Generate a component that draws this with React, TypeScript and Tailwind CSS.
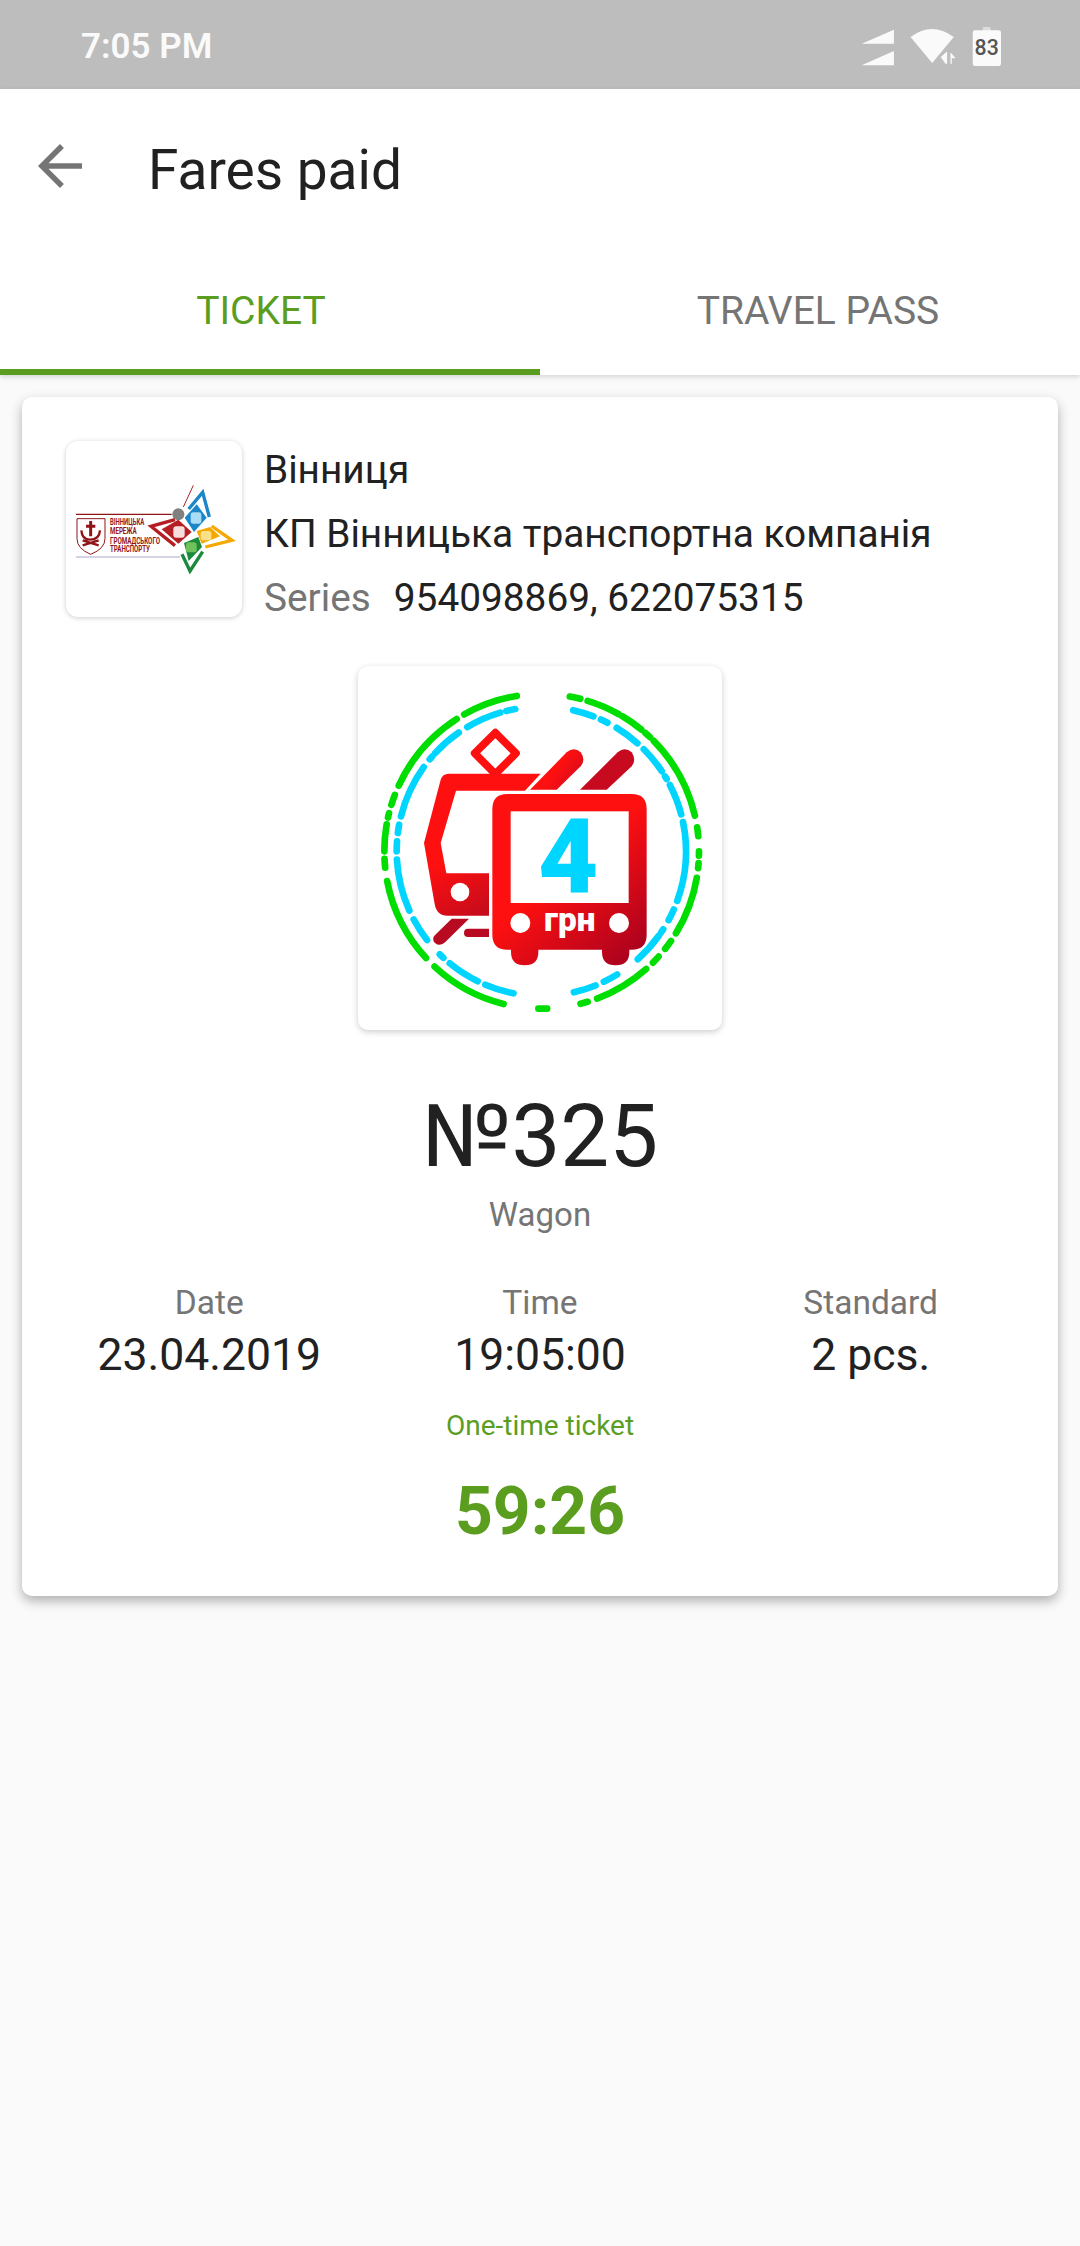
const GREEN_ARCS: Array<[number, number]> = [
  [10.3, 14.2], [17, 29.2], [30.8, 39.2], [41.1, 43.5], [45.4, 76.9], [81.2, 84.5], [90, 91.6], [94.3, 96.1],
  [99.7, 121.4], [124.7, 128.3], [132, 135], [138.4, 159.4], [163, 165.7], [178, 181.2], [194, 222.9],
  [227.3, 259.1], [264, 267.3], [270, 279.9], [282.4, 284], [287.2, 291], [294.7, 327.3], [330.5, 350.9],
];

const BLUE_ARCS: Array<[number, number]> = [
  [12.7, 21.1], [24.3, 27.2], [31.4, 41.6], [45.1, 56.4], [58.8, 60], [62.7, 75.2], [78.3, 110], [113.7, 118.4],
  [122.6, 124], [125.6, 138.2], [148.4, 154.4], [158, 167], [191.1, 202.8], [206.1, 219.3], [222.6, 224.6],
  [232.2, 241.9], [245.8, 266.7], [270, 274], [277.3, 280.6], [284, 305.6], [309.5, 311], [312.8, 325.2],
  [329.2, 343.5], [346, 349.6],
];

const arcPath = (cx: number, cy: number, r: number, from: number, to: number) => {
  const point = (deg: number) => {
    const rad = (deg * Math.PI) / 180;
    return `${(cx + r * Math.sin(rad)).toFixed(1)} ${(cy - r * Math.cos(rad)).toFixed(1)}`;
  };
  return `M${point(from)} A${r} ${r} 0 0 1 ${point(to)}`;
};

const StatusIcons = () => (
  <svg viewBox="180 80 430 120" className="h-[40px] w-[143px] mt-[4px]">
    <path d="M185 130 L282 88 V130 Z M185 195 L282 152 V195 Z" fill="#fafafa" />
    <path d="M332 110 Q396 62 462 110 L397 188 Z" fill="#fafafa" />
    <path d="M420 170 L444 148 V192 L436 192 Z M450 150 L472 176 L458 176 V192 H450 Z" fill="#fafafa" stroke="#bdbdbd" strokeWidth="4" />
    <rect x="549" y="80" width="24" height="14" rx="3" fill="#dcdcdc" />
    <rect x="519" y="90" width="85" height="107" rx="7" fill="#fafafa" />
    <text x="561" y="164" textAnchor="middle" fontSize="64" fontWeight="500" fill="#555555" fontFamily="Roboto, sans-serif">83</text>
  </svg>
);

const CityLogo = () => (
  <svg viewBox="48 32 528 528" className="w-full h-full">
    <path d="M78 252 H365" stroke="#8f1519" strokeWidth="4" />
    <path d="M78 380 H390" stroke="#aaa8c8" strokeWidth="3" />
    <path d="M81 265 H165 V325 Q165 355 122 372 Q81 355 81 325 Z" fill="#fff" stroke="#8f1519" strokeWidth="3" />
    <path d="M122 272 V318 M108 288 H136" stroke="#8f1519" strokeWidth="9" />
    <path d="M94 300 Q96 328 120 328 Q148 328 150 300 M98 345 L146 330 M146 345 L98 330" fill="none" stroke="#8f1519" strokeWidth="7" />
    <g fill="#8f1519" fontFamily="Roboto, sans-serif" fontWeight="700" fontSize="25">
      <text x="180" y="285" textLength="103" lengthAdjust="spacingAndGlyphs">ВІННИЦЬКА</text>
      <text x="180" y="312" textLength="80" lengthAdjust="spacingAndGlyphs">МЕРЕЖА</text>
      <text x="180" y="340" textLength="150" lengthAdjust="spacingAndGlyphs">ГРОМАДСЬКОГО</text>
      <text x="180" y="366" textLength="120" lengthAdjust="spacingAndGlyphs">ТРАНСПОРТУ</text>
    </g>
    <path d="M430 165 L400 230" stroke="#a8242a" strokeWidth="3" />
    <circle cx="385" cy="252" r="18" fill="#808080" />
    <path d="M404 262 L440 222 L470 262 L432 305 Z" fill="#1b87c9" />
    <path d="M416 236 L458 186 L478 260" fill="none" stroke="#1b87c9" strokeWidth="10" />
    <rect x="422" y="246" width="32" height="34" rx="8" fill="#a9dcf5" />
    <path d="M335 297 L385 268 L425 305 L385 340 Z" fill="#b51f24" />
    <path d="M375 268 L303 288 L375 346" fill="none" stroke="#b51f24" strokeWidth="10" />
    <rect x="370" y="288" width="34" height="34" rx="9" fill="#f7dede" />
    <path d="M440 302 L480 290 L510 318 L455 340 Z" fill="#f5a800" />
    <path d="M485 287 L546 330 L466 350" fill="none" stroke="#f5a800" strokeWidth="10" />
    <rect x="452" y="302" width="32" height="28" rx="8" fill="#fbe08a" />
    <path d="M402 338 L445 320 L456 350 L416 392 Z" fill="#1c8a3c" />
    <path d="M396 372 L420 422 L458 364" fill="none" stroke="#1c8a3c" strokeWidth="10" />
    <rect x="408" y="336" width="32" height="30" rx="8" fill="#6fc15a" />
  </svg>
);

const FareBadge = () => (
  <svg viewBox="24 34 1092 1092" className="w-full h-full">
    <defs>
      <linearGradient id="bus" gradientUnits="userSpaceOnUse" x1="640" y1="640" x2="890" y2="930">
        <stop offset="0" stopColor="#ff1010" />
        <stop offset="1" stopColor="#a00020" />
      </linearGradient>
      <linearGradient id="rear" gradientUnits="userSpaceOnUse" x1="280" y1="620" x2="400" y2="860">
        <stop offset="0" stopColor="#ff1010" />
        <stop offset="1" stopColor="#b00a20" />
      </linearGradient>
      <linearGradient id="arm" gradientUnits="userSpaceOnUse" x1="620" y1="340" x2="700" y2="400">
        <stop offset="0" stopColor="#ff1010" />
        <stop offset="1" stopColor="#c80a20" />
      </linearGradient>
    </defs>
    <g fill="none" strokeLinecap="round" strokeWidth="20">
      {GREEN_ARCS.map(([from, to]) => (
        <path key={from} d={arcPath(575, 590, 472, from, to)} stroke="#00dd00" />
      ))}
      {BLUE_ARCS.map(([from, to]) => (
        <path key={from} d={arcPath(574, 590, 434, from, to)} stroke="#00d5ff" />
      ))}
    </g>
    <polygon points="436,234 498,296 436,358 374,296" fill="none" stroke="#ff1010" strokeWidth="23" strokeLinejoin="round" />
    <path d="M297 357 H572 L525 408 H318 L272 565 L289 656 H417 V783 H292 Q260 783 254 748 L222 565 L272 375 Q277 357 297 357 Z" fill="url(#rear)" />
    <circle cx="330" cy="712" r="28" fill="#fff" />
    <path d="M305 792 H357 L286 862 Q270 878 254 864 Q244 850 256 840 Z" fill="#b80a20" />
    <path d="M417 822 V847 H354 Q342 847 342 835 Q342 822 354 822 Z" fill="#b80a20" />
    <path d="M540 405 L650 293 Q672 275 692 293 Q708 315 692 335 L620 405 Z" fill="url(#arm)" />
    <path d="M690 405 L803 293 Q825 275 845 293 Q860 315 845 335 L770 405 Z" fill="url(#arm)" />
    <path d="M472 418 H845 Q890 418 890 463 V840 Q890 885 845 885 H838 V892 Q838 932 797 932 Q756 932 756 892 V885 H565 V892 Q565 932 524 932 Q483 932 483 892 V885 H472 Q427 885 427 840 V463 Q427 418 472 418 Z" fill="url(#bus)" />
    <rect x="482" y="470" width="354" height="275" fill="#fff" />
    <circle cx="511" cy="805" r="30" fill="#fff" />
    <circle cx="807" cy="805" r="30" fill="#fff" />
    <text x="655" y="715" textAnchor="middle" fontSize="313" fontWeight="900" fill="#00d5ff" fontFamily="Roboto, sans-serif">4</text>
    <text x="659" y="830" textAnchor="middle" fontSize="100" fontWeight="900" fill="#fff" fontFamily="Roboto, sans-serif">грн</text>
  </svg>
);

const Stat = ({ label, value }: { label: string; value: string }) => (
  <div className="flex flex-col items-center">
    <span className="text-[33.5px] leading-[44px] text-[#757575]">{label}</span>
    <span className="text-[44.5px] leading-[60px] text-[#212121]">{value}</span>
  </div>
);

const App = () => {
  return (
    <div className="w-[1080px] h-[2246px] bg-[#fafafa] font-['Roboto',sans-serif] overflow-hidden">
      <div className="h-[89px] bg-[#bdbdbd] flex items-center justify-between pl-[81px] pr-[77px]">
        <span className="text-[35px] font-semibold text-[#fafafa] mt-[6px]">7:05 PM</span>
        <StatusIcons />
      </div>

      <div className="bg-white shadow-[0_2px_5px_rgba(0,0,0,0.15)]">
        <div className="h-[168px] flex items-center">
          <svg viewBox="0 0 24 24" className="w-[66px] h-[66px] ml-[27px] mb-[14px]" fill="#757575">
            <path d="M20 11H7.83l5.59-5.59L12 4l-8 8 8 8 1.41-1.41L7.83 13H20v-2z" />
          </svg>
          <h1 className="ml-[55px] mb-[6px] text-[55px] leading-none text-[#212121]">Fares paid</h1>
        </div>
        <div className="flex h-[118px]">
          <div className="w-1/2 border-b-[6px] border-[#5b9e1f] flex items-center justify-center pr-[18px] pb-[3px]">
            <span className="text-[39px] text-[#5b9e1f]">TICKET</span>
          </div>
          <div className="w-1/2 flex items-center justify-center pl-[16px] pb-[9px]">
            <span className="text-[39px] text-[#757575]">TRAVEL PASS</span>
          </div>
        </div>
      </div>

      <div className="mx-[22px] mt-[22px] h-[1199px] bg-white rounded-[10px] shadow-[0_5px_12px_rgba(0,0,0,0.3)] px-[22px] pt-[44px]">
        <div className="flex h-[176px] pl-[22px]">
          <div className="w-[176px] h-[176px] rounded-[12px] bg-white shadow-[0_1px_5px_rgba(0,0,0,0.2)]">
            <CityLogo />
          </div>
          <div className="ml-[22px] -mt-[3px] flex flex-col text-[38.8px] leading-[64px] text-[#212121]">
            <span>Вінниця</span>
            <span>КП Вінницька транспортна компанія</span>
            <span>
              <span className="text-[#757575]">Series</span>
              <span className="ml-[23px]">954098869, 622075315</span>
            </span>
          </div>
        </div>

        <div className="w-[364px] h-[364px] mx-auto mt-[49px] rounded-[10px] bg-white shadow-[0_2px_6px_rgba(0,0,0,0.2)]">
          <FareBadge />
        </div>

        <div className="mt-[51px] text-center text-[87px] leading-[110px] text-[#212121]">№325</div>
        <div className="mt-[2px] text-center text-[33px] leading-[44px] text-[#757575]">Wagon</div>

        <div className="grid grid-cols-3 mt-[44px]">
          <Stat label="Date" value="23.04.2019" />
          <Stat label="Time" value="19:05:00" />
          <Stat label="Standard" value="2 pcs." />
        </div>

        <div className="mt-[21px] text-center text-[28px] leading-[40px] text-[#5b9e1f]">One-time ticket</div>
        <div className="mt-[26px] text-center text-[66px] leading-[80px] font-bold text-[#5b9e1f]">59:26</div>
      </div>
    </div>
  );
};

export default App;
